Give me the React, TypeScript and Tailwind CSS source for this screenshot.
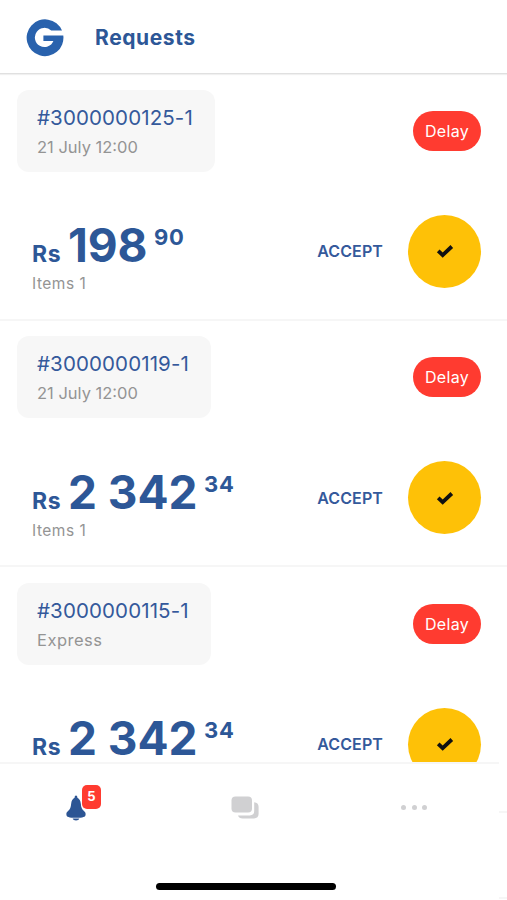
import React from "react";

interface Request {
  id: string;
  note: string;
  noteTracking: string;
  whole: string;
  cents: string;
  items?: string;
  cardWidth: string;
}

const REQUESTS: Request[] = [
  {
    id: "#3000000125-1",
    note: "21 July 12:00",
    noteTracking: "tracking-normal",
    whole: "198",
    cents: "90",
    items: "Items 1",
    cardWidth: "w-[198px]",
  },
  {
    id: "#3000000119-1",
    note: "21 July 12:00",
    noteTracking: "tracking-normal",
    whole: "2 342",
    cents: "34",
    items: "Items 1",
    cardWidth: "w-[194px]",
  },
  {
    id: "#3000000115-1",
    note: "Express",
    noteTracking: "tracking-[0.5px]",
    whole: "2 342",
    cents: "34",
    cardWidth: "w-[194px]",
  },
];

function Logo() {
  return (
    <svg width="38" height="38" viewBox="0 0 38 38" fill="#2962ad" aria-hidden="true">
      <path d="M36 11.600A18.400 18.400 0 1 0 37.300 16.400H17.400V22H27.400A9.600 9.600 0 1 1 25.200 11.600Z" />
    </svg>
  );
}

function BellIcon() {
  return (
    <svg width="20" height="26" viewBox="0 0 20 26" fill="#2c5594" aria-hidden="true">
      <path d="M10 .6c.9 0 1.300.8 1.400 2.200 2 1 3.100 2.800 3.400 5.800.4 3.800 1 5.600 2.900 7.200 1.500 1.200 2.100 2.300 1.900 3.900-.2 2.200-2.400 3.100-9.600 3.100S.6 21.900.4 19.700c-.2-1.600.4-2.700 1.900-3.900 1.900-1.600 2.500-3.400 2.900-7.200.3-3 1.400-4.800 3.400-5.800C8.700 1.400 9.100.6 10 .6Z" />
      <path d="M6.600 23.500h6.800c-.4 1.300-1.700 1.900-3.400 1.900s-3-.6-3.400-1.900Z" />
    </svg>
  );
}

function ChatIcon() {
  return (
    <svg width="28" height="23" viewBox="0 0 28 23" fill="#d0d0d2" aria-hidden="true">
      <rect x="0.500" y="0.500" width="20.500" height="16" rx="4" />
      <path d="M23.200 6.200c2.800.2 4.400 1.800 4.400 4.500v7.100c0 2.900-1.700 4.600-4.600 4.600H11.600c-2.400 0-4-1-4.600-3h11.700c3.100 0 4.500-1.500 4.500-4.400V6.200Z" />
    </svg>
  );
}

function RequestRow({ request }: { request: Request }) {
  return (
    <li className="flex h-[246.5px] shrink-0 flex-col border-b-2 border-[#f6f6f6] pt-[15.5px] pr-[26px] pl-[17px]">
      <div className="flex items-center justify-between">
        <div className={`${request.cardWidth} h-[82px] rounded-xl bg-[#f7f7f7] pt-[13px] pl-5 whitespace-nowrap`}>
          <p className="text-[20.5px] leading-[30px] tracking-[0.12px] text-[#34599b]">{request.id}</p>
          <p className={`${request.noteTracking} text-[16.5px] leading-[29px] text-[#949494]`}>{request.note}</p>
        </div>
        <span className="flex h-10 w-[68px] items-center justify-center rounded-full bg-[#ff3b30] text-base tracking-[0.3px] text-white">
          Delay
        </span>
      </div>

      <div className="mt-[43px] flex h-[73px] items-center justify-between pl-[15px]">
        <div className="pt-[14px]">
          <p className="flex items-baseline font-bold whitespace-nowrap text-[#2d5797]">
            <span className="text-[23px] leading-none tracking-[0.7px]">Rs</span>
            <span className="ml-[6.5px] text-[46px] leading-[46px]">{request.whole}</span>
            <span className="ml-[6.5px] self-start pt-1 text-[22px] leading-[22px] tracking-[0.7px]">{request.cents}</span>
          </p>
          <p className="mt-[6px] h-5 text-[15.5px] leading-5 tracking-[0.5px] text-[#949494]">{request.items}</p>
        </div>
        <div className="flex items-center gap-[25px]">
          <span className="text-base font-semibold tracking-[0.1px] text-[#34599b]">ACCEPT</span>
          <button className="flex size-[73px] items-center justify-center rounded-full bg-[#fec107]" aria-label="Accept">
            <svg width="18" height="14" viewBox="0 0 18 14" fill="none" stroke="#111" strokeWidth="3.8">
              <path d="M2.200 6.800L6.700 11.100L15.800 2.500" />
            </svg>
          </button>
        </div>
      </div>
    </li>
  );
}

export default function App() {
  return (
    <div className="flex h-[900px] w-[507px] flex-col overflow-hidden bg-white font-['Inter',sans-serif]">
      <header className="flex h-[74px] shrink-0 items-center gap-[31px] border-b border-[#e0e0e0] pt-0.5 pl-[26px] shadow-[0_1px_1px_#f0f0f0]">
        <Logo />
        <h1 className="text-[21px] font-bold tracking-[0.6px] text-[#2d5797]">Requests</h1>
      </header>

      <ul className="flex h-[688px] shrink-0 flex-col overflow-hidden">
        {REQUESTS.map((request) => (
          <RequestRow key={request.id} request={request} />
        ))}
      </ul>

      <div className="flex flex-1">
        <nav className="flex w-[499px] flex-col border-t-2 border-[#f6f6f6]">
          <div className="flex h-[87px] items-center pl-[66px]">
            <div className="relative">
              <BellIcon />
              <span className="absolute -top-[10px] left-4 flex h-6 w-[19px] items-center justify-center rounded-[5px] bg-[#ff3b30] text-[13px] font-bold text-white ring-1 ring-white">
                5
              </span>
            </div>
            <div className="ml-[145px]">
              <ChatIcon />
            </div>
            <div className="ml-[142px] flex gap-[5.5px]">
              <i className="size-[5px] rounded-full bg-[#d0d0d2]" />
              <i className="size-[5px] rounded-full bg-[#d0d0d2]" />
              <i className="size-[5px] rounded-full bg-[#d0d0d2]" />
            </div>
          </div>
          <div className="mt-8 ml-[156px] h-[7px] w-[180px] rounded-full bg-black" />
        </nav>
        {/* Edge of the row behind the tab bar */}
        <div className="mt-[49px] h-[88px] flex-1 border-y-2 border-[#f6f6f6]" />
      </div>
    </div>
  );
}
